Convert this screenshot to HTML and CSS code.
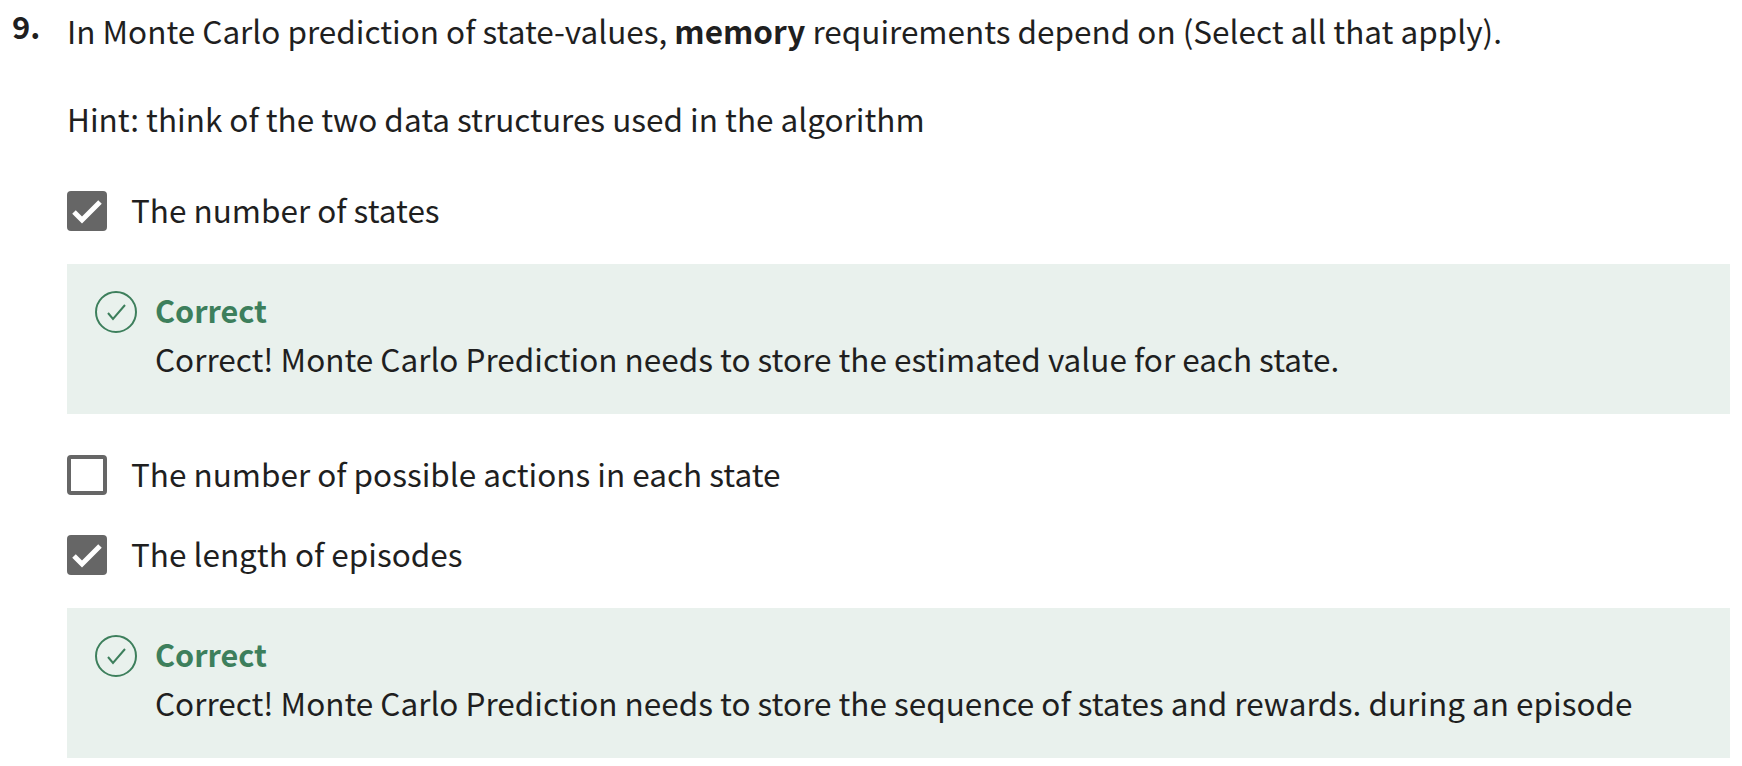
FILE: index.html
```html
<!DOCTYPE html>
<html lang="en">
<head>
    <meta charset="UTF-8">
    <title>Question 9</title>
    <link rel="stylesheet" href="styles.css">
</head>
<body>
<section class="question">
    <div class="number">9.</div>
    <div class="content">
        <p class="prompt">In Monte Carlo prediction of state-values, <strong>memory</strong> requirements depend on (Select all that apply).</p>
        <p class="hint">Hint: think of the two data structures used in the algorithm</p>

        <div class="option">
            <span class="box checked"><svg viewBox="0 0 40 40"><path d="M7 21l8 8L33 11" /></svg></span>
            <span class="label">The number of states</span>
        </div>
        <div class="feedback">
            <svg class="tick" viewBox="0 0 42 42"><circle cx="21" cy="21" r="20" /><path d="M13 22l5 6 12-14" /></svg>
            <div>
                <div class="feedback-title">Correct</div>
                <div>Correct! Monte Carlo Prediction needs to store the estimated value for each state.</div>
            </div>
        </div>

        <div class="option after-feedback">
            <span class="box"></span>
            <span class="label">The number of possible actions in each state</span>
        </div>

        <div class="option">
            <span class="box checked"><svg viewBox="0 0 40 40"><path d="M7 21l8 8L33 11" /></svg></span>
            <span class="label">The length of episodes</span>
        </div>
        <div class="feedback">
            <svg class="tick" viewBox="0 0 42 42"><circle cx="21" cy="21" r="20" /><path d="M13 22l5 6 12-14" /></svg>
            <div>
                <div class="feedback-title">Correct</div>
                <div>Correct! Monte Carlo Prediction needs to store the sequence of states and rewards. during an episode</div>
            </div>
        </div>
    </div>
</section>
</body>
</html>
```

FILE: styles.css
```css
html, body {
    margin: 0;
    padding: 0;
    background-color: #fff;
}
body {
    font-family: "Noto Sans CJK SC", "Noto Sans", sans-serif;
    font-size: 31.5px;
    line-height: 44px;
    color: #1f1f1f;
    overflow: hidden;
}
.question {
    display: flex;
    padding: 8px 12px 0 12px;
}
.number {
    width: 55px;
    flex: none;
    font-size: 31px;
    font-weight: 700;
    line-height: 36px;
}
.content {
    flex: 1;
}
.prompt, .hint {
    margin: 0;
}
.hint {
    margin-top: 44px;
}
.option {
    display: flex;
    align-items: center;
    gap: 24px;
    margin-top: 36px;
}
.hint + .option {
    margin-top: 49px;
}
.after-feedback {
    margin-top: 39px;
}
.label {
    line-height: 40px;
    padding-bottom: 4px;
}
.box {
    width: 40px;
    height: 40px;
    box-sizing: border-box;
    border: 4px solid #666;
    border-radius: 4px;
    flex: none;
}
.box.checked {
    background-color: #666;
    border: none;
}
.box svg {
    display: block;
}
.box svg path {
    fill: none;
    stroke: #fff;
    stroke-width: 5;
}
.feedback {
    display: flex;
    gap: 18px;
    margin-top: 31px;
    padding: 22px 28px 32px;
    background-color: #e9f1ed;
    line-height: 48px;
}
.tick {
    width: 42px;
    height: 42px;
    flex: none;
    margin-top: 5px;
}
.tick circle, .tick path {
    fill: none;
    stroke: #3d7f5c;
    stroke-width: 2;
}
.feedback-title {
    color: #3d7f5c;
    font-size: 30.6px;
    font-weight: 700;
}
```
